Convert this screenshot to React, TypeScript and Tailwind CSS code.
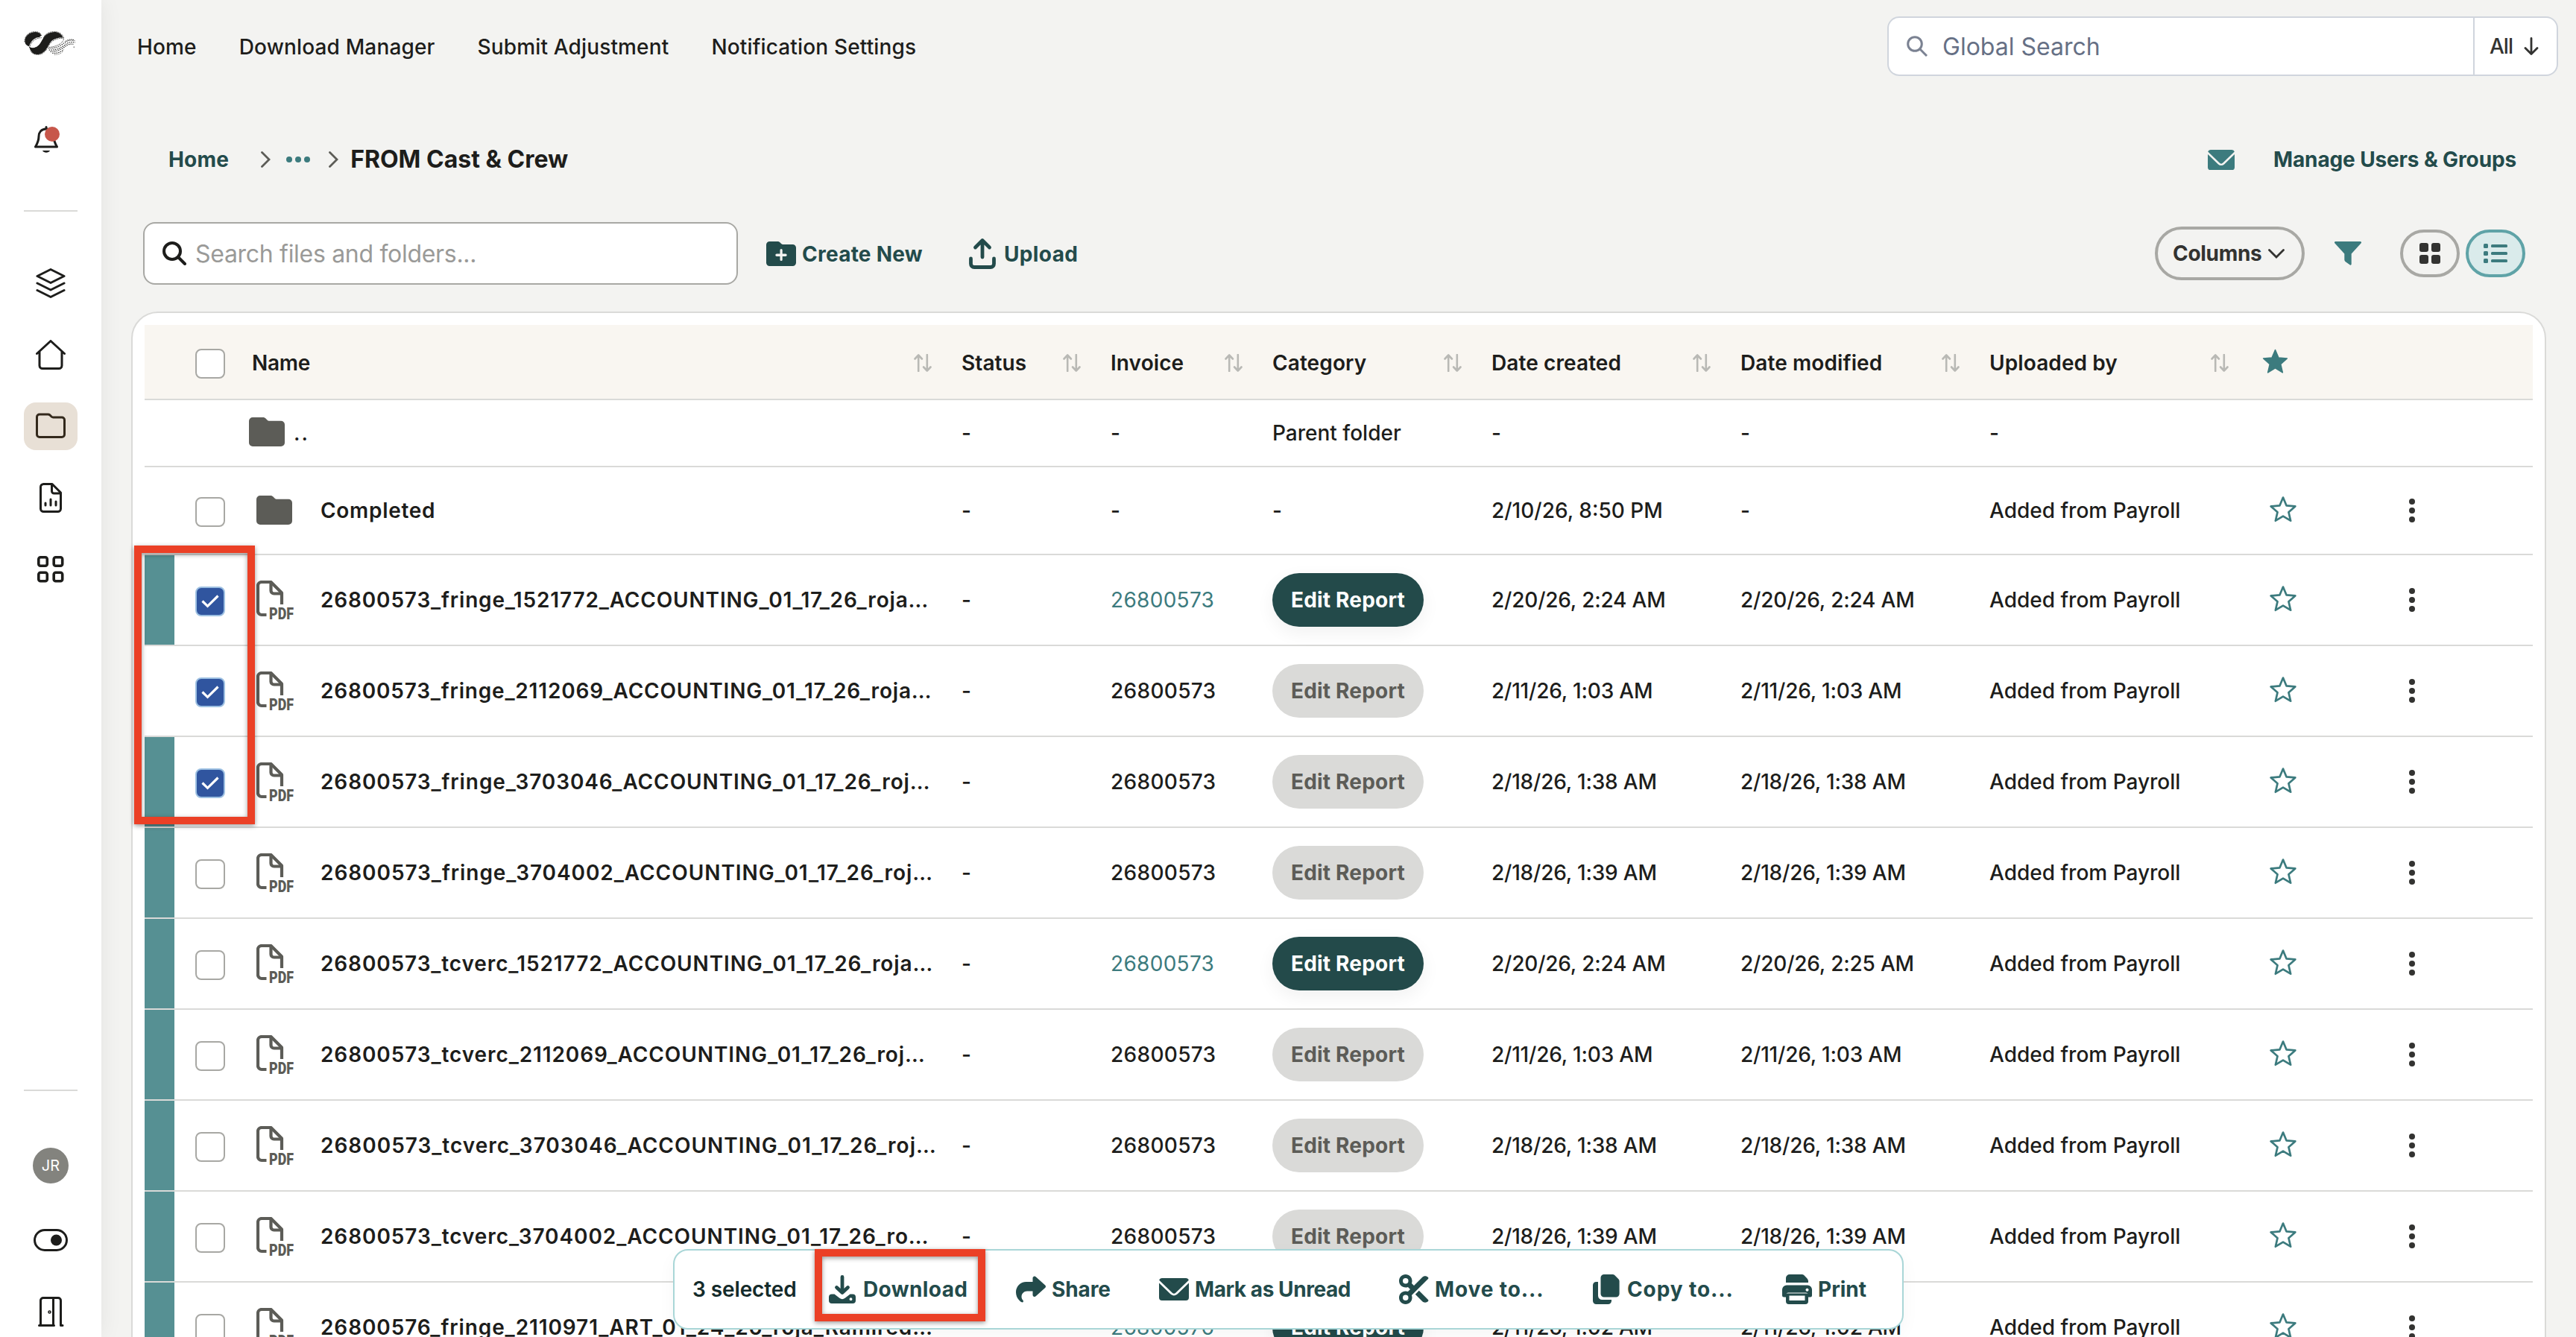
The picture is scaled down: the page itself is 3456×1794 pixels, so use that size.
import type { ReactNode } from "react";
import clsx from "clsx";
import { FaScissors, FaShare } from "react-icons/fa6";

type FileRow = {
  name: string;
  nameClass: string;
  invoice: string;
  active: boolean;
  unread: boolean;
  selected: boolean;
  created: string;
  modified: string;
};

const files: FileRow[] = [
  { name: "26800573_fringe_1521772_ACCOUNTING_01_17_26_roja…", nameClass: "tracking-[0.84px]", invoice: "26800573", active: true, unread: true, selected: true, created: "2/20/26, 2:24 AM", modified: "2/20/26, 2:24 AM" },
  { name: "26800573_fringe_2112069_ACCOUNTING_01_17_26_roja…", nameClass: "tracking-[0.81px]", invoice: "26800573", active: false, unread: false, selected: true, created: "2/11/26, 1:03 AM", modified: "2/11/26, 1:03 AM" },
  { name: "26800573_fringe_3703046_ACCOUNTING_01_17_26_roj…", nameClass: "tracking-[0.9px]", invoice: "26800573", active: false, unread: true, selected: true, created: "2/18/26, 1:38 AM", modified: "2/18/26, 1:38 AM" },
  { name: "26800573_fringe_3704002_ACCOUNTING_01_17_26_roj…", nameClass: "tracking-[0.94px]", invoice: "26800573", active: false, unread: true, selected: false, created: "2/18/26, 1:39 AM", modified: "2/18/26, 1:39 AM" },
  { name: "26800573_tcverc_1521772_ACCOUNTING_01_17_26_roja…", nameClass: "tracking-[0.88px]", invoice: "26800573", active: true, unread: true, selected: false, created: "2/20/26, 2:24 AM", modified: "2/20/26, 2:25 AM" },
  { name: "26800573_tcverc_2112069_ACCOUNTING_01_17_26_roj…", nameClass: "tracking-[0.9px]", invoice: "26800573", active: false, unread: true, selected: false, created: "2/11/26, 1:03 AM", modified: "2/11/26, 1:03 AM" },
  { name: "26800573_tcverc_3703046_ACCOUNTING_01_17_26_roj…", nameClass: "tracking-[0.99px]", invoice: "26800573", active: false, unread: true, selected: false, created: "2/18/26, 1:38 AM", modified: "2/18/26, 1:38 AM" },
  { name: "26800573_tcverc_3704002_ACCOUNTING_01_17_26_ro…", nameClass: "tracking-[0.92px]", invoice: "26800573", active: false, unread: true, selected: false, created: "2/18/26, 1:39 AM", modified: "2/18/26, 1:39 AM" },
  { name: "26800576_fringe_2110971_ART_01_24_26_roja_Ramired…", nameClass: "tracking-[0.9px]", invoice: "26800576", active: true, unread: true, selected: false, created: "2/11/26, 1:02 AM", modified: "2/11/26, 1:02 AM" },
];

const columns = ["Status", "Invoice", "Category", "Date created", "Date modified", "Uploaded by"];

const rowGrid =
  "grid grid-cols-[40px_95px_961px_200px_217px_294px_334px_334px_361px_172px_1fr] border-b-2 border-[#dadad8]";

const STAR = "M12 1.6l2.9 6.9 7.4.6-5.6 4.9 1.7 7.3L12 17.4l-6.4 3.9 1.7-7.3L1.700 9.100l7.400-.6z";

/* ---------- icons ---------- */

function Line({ className, children, width = 2.4 }: { className?: string; children: ReactNode; width?: number }) {
  return (
    <svg viewBox="0 0 40 40" fill="none" stroke="currentColor" strokeWidth={width} strokeLinecap="round" strokeLinejoin="round" className={clsx("size-10 shrink-0", className)}>
      {children}
    </svg>
  );
}

function Logo() {
  return (
    <svg viewBox="0 0 214 96" className="h-8 w-[72px]" fill="#1d1d1b">
      <path d="M3 40C3 18 22 3 45 3c13 0 21 5 24 14l-8 7c-17 0-34 14-41 37C8 57 3 49 3 40z" />
      <path d="M20 60c5 7 14 8 24 5 18-5 22-20 32-35C84 14 100 3 122 3c17 0 29 8 35 23-18-3-40 4-51 18-12 16-20 49-54 49-17 0-28-14-32-33z" />
      <g fill="none" stroke="#1d1d1b" strokeDasharray="2.500 2.500">
        <path d="M2 42C2 16 22 1.500 45 1.500c14 0 24 8 25 16" strokeWidth="3" />
        <path d="M22 66c4-22 22-40 50-40M24 68c14 2 34-2 48-28" strokeWidth="3" />
        <path d="M78 26C86 8 104 1.500 122 1.500c18 0 32 8 38 26" strokeWidth="3" />
        <path d="M26 80c10 14 28 16 42 12 14-6 22-16 28-30" strokeWidth="3" />
        <path d="M98 62c6-22 34-36 60-34 6 12-20 34-56 36" strokeWidth="3" />
      </g>
      <g fill="none" stroke="#1d1d1b" strokeDasharray="4 4" strokeWidth="3.500">
        <path d="M98 68c24 2 44-6 62-20 12-10 26-16 44-10" />
        <path d="M100 75c24 2 48-6 64-20 12-10 24-14 42-10" />
        <path d="M106 82c22 0 44-8 58-20 12-10 22-12 34-10" />
        <path d="M114 88c16 2 34-4 46-14" />
        <path d="M122 94c12 0 22-2 32-10" strokeWidth="2" />
        <path d="M166 40c10-7 24-10 38-4" strokeWidth="2.500" />
      </g>
      <circle cx="201" cy="64" r="3" fill="#999" />
    </svg>
  );
}

function Envelope({ className }: { className?: string }) {
  return (
    <svg viewBox="0 0 40 30" fill="currentColor" className={className}>
      <path d="M4 0h32a4 4 0 0 1 3.800 2.800L22.500 19.500a3.600 3.600 0 0 1-5 0L.2 2.800A4 4 0 0 1 4 0z" />
      <path d="M0 6.600l15.500 15a6.500 6.500 0 0 0 9 0L40 6.600V26a4 4 0 0 1-4 4H4a4 4 0 0 1-4-4z" />
    </svg>
  );
}

function SortIcon() {
  return (
    <svg viewBox="0 0 24 24" className="mt-0.5 size-6" fill="none" stroke="#b9b9b5" strokeWidth="2.600" strokeLinecap="round" strokeLinejoin="round">
      <path d="M6.200 23V1.500M1.500 6.500l4.700-5 4.700 5M17.800 1v21.500M13.100 17.500l4.700 5 4.700-5" />
    </svg>
  );
}

function FolderIcon({ className }: { className?: string }) {
  return (
    <svg viewBox="0 0 48 39" className={clsx("h-[39px] w-12 shrink-0", className)} fill="#5c5c57">
      <path d="M5 0h14c1.500 0 2.600.6 3.500 1.600l2.200 2.200c.8.700 1.600 1 2.800 1H43a5 5 0 0 1 5 5V34a5 5 0 0 1-5 5H5a5 5 0 0 1-5-5V5a5 5 0 0 1 5-5z" />
    </svg>
  );
}

function PdfIcon() {
  return (
    <svg viewBox="0 0 50 52" className="h-[52px] w-[50px] shrink-0" fill="none" stroke="#5c5c57" strokeWidth="4.200" strokeLinejoin="round">
      <path d="M13.500 46H7a5 5 0 0 1-5-5V7a5 5 0 0 1 5-5h12.500L34 16.500V32" />
      <path d="M19.500 2v11.500a4 4 0 0 0 4 4H34" />
      <text x="17" y="51.500" textLength="33" lengthAdjust="spacingAndGlyphs" fill="#5c5c57" stroke="none" className="font-['Roboto',sans-serif] text-[22px] font-black">
        PDF
      </text>
    </svg>
  );
}

function StarOutline() {
  return (
    <svg viewBox="0 0 24 24" className="-mt-0.5 ml-[14px] size-[38px]" fill="none" stroke="#3c7b7e" strokeWidth="1.700" strokeLinejoin="round">
      <path d={STAR} />
    </svg>
  );
}

function Kebab() {
  return (
    <div className="ml-[30px] flex flex-col gap-1">
      <span className="size-2 rounded-full bg-[#333331]" />
      <span className="size-2 rounded-full bg-[#333331]" />
      <span className="size-2 rounded-full bg-[#333331]" />
    </div>
  );
}

function Checkbox({ checked = false }: { checked?: boolean }) {
  return (
    <span
      className={clsx(
        "mt-1 ml-7 flex size-10 items-center justify-center rounded-lg border-2",
        checked ? "border-[#9dc0e2] bg-[#30559f]" : "border-[#a8a8a4] bg-white"
      )}
    >
      {checked && (
        <svg viewBox="0 0 24 18" className="h-[18px] w-6" fill="none" stroke="#fff" strokeWidth="3.200">
          <path d="M1.500 8.500l7 6.800L22.500 1.500" />
        </svg>
      )}
    </span>
  );
}

/* ---------- page parts ---------- */

function Sidebar() {
  return (
    <aside className="z-10 flex w-[136px] shrink-0 flex-col items-center bg-white shadow-[0_0_28px_rgba(0,0,0,0.07)]">
      <div className="mt-[42px] h-8">
        <Logo />
      </div>
      <div className="relative mt-[94px] mr-3 h-10 w-8 text-[#1d1d1b]">
        <svg viewBox="0 0 32 38" className="mt-[1px] h-[38px] w-8" fill="none" stroke="currentColor" strokeWidth="3" strokeLinecap="round" strokeLinejoin="round">
          <path d="M16 1.500v2M16 4C9 4 6 9 6 14c0 6-1.500 9-4.500 14h29C27.500 23 26 20 26 14c0-5-3-10-10-10z" />
          <path d="M11 33h10c-1.500 3.500-8.500 3.500-10 0z" fill="currentColor" stroke="none" />
        </svg>
        <span className="absolute top-0.5 left-3.5 size-5 rounded-full bg-[#c7574b]" />
      </div>
      <div className="mt-[74px] h-0.5 w-[72px] bg-[#dadad8]" />
      <nav className="mt-16 flex flex-col gap-8 text-[#1d1d1b]">
        <div className="flex h-16 w-[72px] items-center justify-center">
          <Line width={3}>
            <path d="M20 1.500l18 9-18 9-18-9zM2 20l18 9 18-9M2 29.500l18 9 18-9" />
          </Line>
        </div>
        <div className="flex h-16 w-[72px] items-center justify-center">
          <Line width={3}>
            <path d="M1.500 18.500L20 1.500l18.500 17M5 16v18.500a4 4 0 0 0 4 4h22a4 4 0 0 0 4-4V16" />
          </Line>
        </div>
        <div className="flex h-16 w-[72px] items-center justify-center rounded-2xl bg-[#e8e0d6] text-[#33291c]">
          <Line width={3}>
            <path d="M5 4h11.500c1 0 1.800.4 2.500 1l2 2c.6.600 1.500 1 2.500 1H35a3.500 3.500 0 0 1 3.500 3.500V31a3.500 3.500 0 0 1-3.500 3.500H5A3.500 3.500 0 0 1 1.500 31V7.500A3.500 3.500 0 0 1 5 4z" />
          </Line>
        </div>
        <div className="flex h-16 w-[72px] items-center justify-center">
          <Line width={3}>
            <path d="M10 1.500h12L33.500 13v21.500a4 4 0 0 1-4 4H10.500a4 4 0 0 1-4-4V5.500a4 4 0 0 1 4-4zM21.500 2v9a3 3 0 0 0 3 3h9M13 27v3M20 22v8M27 25v5" />
          </Line>
        </div>
        <div className="flex h-16 w-[72px] items-center justify-center">
          <Line width={3.6}>
            <rect x="3.800" y="3.800" width="11.500" height="11.500" rx="2.500" />
            <rect x="24.200" y="3.800" width="11.500" height="11.500" rx="2.500" />
            <rect x="3.800" y="24.200" width="11.500" height="11.500" rx="2.500" />
            <rect x="24.200" y="24.200" width="11.500" height="11.500" rx="2.500" />
          </Line>
        </div>
      </nav>
      <div className="mt-auto h-0.5 w-[72px] bg-[#dadad8]" />
      <div className="mt-[76px] flex size-12 items-center justify-center rounded-full bg-[#83837e] text-[20px] text-white">JR</div>
      <svg viewBox="0 0 46 30" className="mt-[61px] h-[30px] w-[46px]" fill="none" stroke="#1d1d1b" strokeWidth="3">
        <rect x="1.500" y="1.500" width="43" height="27" rx="13.500" />
        <circle cx="30.500" cy="15" r="7.500" fill="#1d1d1b" stroke="none" />
      </svg>
      <Line width={3} className="mt-[61px] mb-[14px] text-[#1d1d1b]">
        <path d="M4.500 38.500h20M6.500 38V5a3.500 3.500 0 0 1 3.500-3.500h13.500V38.500M24 1.500h6A3.500 3.500 0 0 1 33.500 5v33.500H36" />
        <circle cx="18.500" cy="20.500" r="0.800" />
      </Line>
    </aside>
  );
}

function TopBar() {
  return (
    <header className="flex h-[124px] shrink-0 items-center justify-between pr-6 pl-12">
      <nav className="flex gap-[57px] pt-0.5 text-[28px] font-medium tracking-[0.15px]">
        <a>Home</a>
        <a>Download Manager</a>
        <a>Submit Adjustment</a>
        <a>Notification Settings</a>
      </nav>
      <div className="flex h-20 w-[900px] items-center rounded-2xl border-2 border-[#d0d5dd] bg-white">
        <svg viewBox="0 0 28 28" className="ml-6 size-7" fill="none" stroke="#7b8292" strokeWidth="3">
          <circle cx="11" cy="11" r="9.300" />
          <path d="M17.500 17.500l9.500 9.500" />
        </svg>
        <span className="ml-5 flex-1 pt-0.5 text-[32px] text-[#667085]">Global Search</span>
        <div className="flex h-full w-[112px] items-center border-l-2 border-[#d0d5dd] pl-5 text-[28px] font-medium text-[#333331]">
          <span className="tracking-[-1px]">All</span>
          <svg viewBox="0 0 20 24" className="ml-[15px] h-6 w-5" fill="none" stroke="currentColor" strokeWidth="2.800" strokeLinecap="round" strokeLinejoin="round">
            <path d="M10 1.500v21M2 14.500l8 8 8-8" />
          </svg>
        </div>
      </div>
    </header>
  );
}

function Chevron({ className }: { className?: string }) {
  return (
    <svg viewBox="0 0 13 22" className={clsx("h-[22px] w-[13px]", className)} fill="none" stroke="#5c5c57" strokeWidth="2.800" strokeLinecap="round">
      <path d="M1.500 1.500l9.500 9.500-9.500 9.500" />
    </svg>
  );
}

function Breadcrumbs() {
  return (
    <div className="flex h-[174px] shrink-0 items-center pt-1.5 pr-[80px] pl-[90px] text-[#234b4b]">
      <a className="text-[28px] font-bold tracking-[0.2px]">Home</a>
      <Chevron className="ml-[43px]" />
      <div className="ml-[21px] flex gap-1">
        <span className="size-2 rounded-full bg-[#3c7b7e]" />
        <span className="size-2 rounded-full bg-[#3c7b7e]" />
        <span className="size-2 rounded-full bg-[#3c7b7e]" />
      </div>
      <Chevron className="ml-[25px]" />
      <span className="ml-4 text-[32px] font-bold text-[#1d1d1b]">FROM Cast &amp; Crew</span>
      <Envelope className="ml-auto h-[27px] w-9 text-[#3c7b7e]" />
      <a className="ml-[52px] text-[28px] font-bold tracking-[-0.13px]">Manage Users &amp; Groups</a>
    </div>
  );
}

function Toolbar() {
  return (
    <div className="flex h-[84px] shrink-0 items-center pr-[68px] pl-14 text-[28px] font-bold text-[#234b4b]">
      <div className="flex h-full w-[798px] items-center rounded-2xl border-2 border-[#a8a8a4] bg-white">
        <svg viewBox="0 0 32 32" className="ml-6 size-8" fill="none" stroke="#1d1d1b" strokeWidth="4" strokeLinecap="round">
          <circle cx="13" cy="13" r="11" />
          <path d="M21 21l9 9" />
        </svg>
        <span className="ml-3 pt-0.5 text-[32px] font-normal tracking-[-0.3px] text-[#9a9a98]">Search files and folders...</span>
      </div>
      <svg viewBox="0 0 40 33" className="ml-[38px] h-[33px] w-10" fill="currentColor">
        <path fillRule="evenodd" d="M4.500 0h10.500c1.400 0 2.500.4 3.400 1.300l1.700 1.700c.7.700 1.500 1 2.400 1h13A4.500 4.500 0 0 1 40 8.500v20a4.500 4.500 0 0 1-4.500 4.500h-31A4.500 4.500 0 0 1 0 28.500v-24A4.500 4.500 0 0 1 4.500 0zM18.500 11.500V16.500h-4.500a1.700 1.700 0 0 0 0 3.400h4.500v4.600a1.600 1.600 0 0 0 3.200 0v-4.600H26a1.700 1.700 0 0 0 0-3.400h-4.300v-5a1.600 1.600 0 0 0-3.200 0z" />
      </svg>
      <span className="ml-2 pt-0.5 tracking-[0.25px]">Create New</span>
      <svg viewBox="0 0 36 42" className="ml-[62px] h-[42px] w-9" fill="none" stroke="currentColor" strokeWidth="4.800" strokeLinecap="round" strokeLinejoin="round">
        <path d="M18 26V4M8.500 13L18 3.500l9.500 9.500M2.500 28v7a4.500 4.500 0 0 0 4.500 4.500h22a4.500 4.500 0 0 0 4.500-4.500v-7" />
      </svg>
      <span className="ml-[11px] pt-0.5 tracking-[0.4px]">Upload</span>

      <button className="ml-auto flex h-[72px] w-[201px] items-center rounded-full border-4 border-[#a8a8a4] pl-5 text-[#333331]">
        <span className="tracking-[-0.3px]">Columns</span>
        <svg viewBox="0 0 22 13" className="ml-[9px] h-[13px] w-[22px]" fill="none" stroke="currentColor" strokeWidth="2.800" strokeLinecap="round">
          <path d="M1.500 1.500L11 11l9.500-9.500" />
        </svg>
      </button>
      <svg viewBox="0 0 36 32" className="ml-10 h-8 w-9" fill="#3c7b7e">
        <path d="M1.500 0h33a1.400 1.400 0 0 1 1.200 2.300L22.700 16.500V30.500a1.200 1.200 0 0 1-1.900 1l-6.300-4.600a3 3 0 0 1-1.200-2.400v-8L.3 2.300A1.400 1.400 0 0 1 1.500 0z" />
      </svg>
      <button className="ml-[52px] flex h-16 w-20 items-center justify-center rounded-full border-4 border-[#a8a8a4]">
        <span className="grid grid-cols-2 gap-1">
          <span className="size-3 rounded-[3px] bg-[#333331]" />
          <span className="size-3 rounded-[3px] bg-[#333331]" />
          <span className="size-3 rounded-[3px] bg-[#333331]" />
          <span className="size-3 rounded-[3px] bg-[#333331]" />
        </span>
      </button>
      <button className="ml-2 flex h-16 w-20 items-center justify-center rounded-full border-4 border-[#5fa3a7] bg-[#daebeb]">
        <svg viewBox="0 0 32 26" className="h-[26px] w-8" fill="#3c7b7e">
          <rect width="6" height="6" rx="1.500" />
          <rect y="10" width="6" height="6" rx="1.500" />
          <rect y="20" width="6" height="6" rx="1.500" />
          <rect x="10" y="1" width="22" height="4" rx="1.500" />
          <rect x="10" y="11" width="22" height="4" rx="1.500" />
          <rect x="10" y="21" width="22" height="4" rx="1.500" />
        </svg>
      </button>
    </div>
  );
}

function TableHeader() {
  return (
    <div className={clsx(rowGrid, "h-[101px] items-center bg-[#f9f6f1] text-[28px] font-semibold")}>
      <span />
      <Checkbox />
      <div className="flex items-center justify-between pr-10 pl-[9px]">
        <span className="pt-0.5 tracking-[-0.3px]">Name</span>
        <SortIcon />
      </div>
      {columns.map((col) => (
        <div key={col} className="flex items-center justify-between pr-10">
          <span className="pt-0.5 tracking-[0.1px]">{col}</span>
          <SortIcon />
        </div>
      ))}
      <svg viewBox="0 0 24 24" className="ml-1 size-[37px]" fill="#3c7b7e" stroke="#3c7b7e" strokeLinejoin="round">
        <path d={STAR} />
      </svg>
    </div>
  );
}

function FileRowView({ file }: { file: FileRow }) {
  return (
    <div className={clsx(rowGrid, "h-[122px] items-center")}>
      <span className={clsx("h-full", file.unread && "bg-[#569093]")} />
      <Checkbox checked={file.selected} />
      <div className="flex items-center pl-[15px]">
        <PdfIcon />
        <span className={clsx("ml-9 font-semibold whitespace-nowrap", file.nameClass)}>{file.name}</span>
      </div>
      <span>-</span>
      <span className={clsx("tracking-[0.3px]", file.active && "font-normal text-[#3c7b7e]")}>{file.invoice}</span>
      <button
        className={clsx(
          "h-[72px] w-[203px] rounded-full font-bold tracking-[0.2px]",
          file.active ? "bg-[#234a4a] text-white shadow-[0_8px_24px_rgba(0,0,0,0.06)]" : "bg-[#dadad8] text-[#5c5c57]"
        )}
      >
        Edit Report
      </button>
      <span className="tracking-[-0.2px]">{file.created}</span>
      <span className="tracking-[-0.2px]">{file.modified}</span>
      <span>Added from Payroll</span>
      <StarOutline />
      <Kebab />
    </div>
  );
}

function BulkBar() {
  return (
    <div className="absolute top-[1676px] left-[903px] z-20 flex h-[108px] w-[1651px] items-center rounded-[20px] border-2 border-[#a9d6d7] bg-white text-[28px] font-bold text-[#234b4b] shadow-[0_8px_24px_rgba(0,0,0,0.04)]">
      <span className="ml-6 w-[183px] font-semibold tracking-[-0.1px] text-[#142b2b]">3 selected</span>
      <div className="flex w-[251px] items-center">
        <svg viewBox="0 0 36 38" className="h-[38px] w-9" fill="none" stroke="currentColor" strokeWidth="4.800" strokeLinecap="round" strokeLinejoin="round">
          <path d="M18 2.500v20M10.500 16.500l7.500 7 7.500-7" />
          <path fill="currentColor" stroke="none" fillRule="evenodd" d="M4 25.500h3.500l6.800 5.200a6 6 0 0 0 7.400 0l6.800-5.200H32a4 4 0 0 1 4 4V34a4 4 0 0 1-4 4H4a4 4 0 0 1-4-4v-4.500a4 4 0 0 1 4-4zM29.500 30.300a1.900 1.900 0 1 0 .01 0z" />
        </svg>
        <span className="ml-2.5 tracking-[0.4px]">Download</span>
      </div>
      <div className="flex w-[192px] items-center">
        <FaShare className="size-10" />
        <span className="ml-2 tracking-[-0.1px]">Share</span>
      </div>
      <div className="flex w-[322px] items-center">
        <Envelope className="h-[30px] w-10" />
        <span className="ml-2 tracking-[-0.44px]">Mark as Unread</span>
      </div>
      <div className="flex w-[260px] items-center">
        <FaScissors className="size-10" />
        <span className="ml-2 tracking-[0.9px]">Move to...</span>
      </div>
      <div className="flex w-[254px] items-center">
        <svg viewBox="0 0 36 40" className="h-10 w-9" fill="currentColor">
          <path d="M15 0h11.500c1 0 2 .4 2.700 1.100l5.200 5.200A4 4 0 0 1 35.600 9v17a4.500 4.500 0 0 1-4.500 4.500H15a4.500 4.500 0 0 1-4.500-4.500V4.500A4.500 4.500 0 0 1 15 0z" />
          <path d="M4.500 10H7v18.500a5.500 5.500 0 0 0 5.500 5.500H25v1.500a4.500 4.500 0 0 1-4.500 4.500h-16A4.500 4.500 0 0 1 0 35.500v-21A4.500 4.500 0 0 1 4.500 10z" />
        </svg>
        <span className="ml-2.5 tracking-[0.9px]">Copy to...</span>
      </div>
      <div className="flex items-center">
        <svg viewBox="0 0 40 40" className="size-10" fill="currentColor">
          <path d="M10 0h16.500c1 0 2 .4 2.700 1.100l4.300 4.300A5 5 0 0 1 35 9v2H5V5a5 5 0 0 1 5-5z" />
          <path fillRule="evenodd" d="M6 14.500h28a6 6 0 0 1 6 6v7.500a2.500 2.500 0 0 1-2.500 2.500H35v-2.500a3.500 3.500 0 0 0-3.500-3.500h-23A3.500 3.500 0 0 0 5 28v2.500H2.500A2.500 2.500 0 0 1 0 28v-7.500a6 6 0 0 1 6-6zM33.500 18.800a2 2 0 1 0 .01 0z" />
          <path fillRule="evenodd" d="M5 25.500h30V36a4 4 0 0 1-4 4H9a4 4 0 0 1-4-4zM9.500 28.500V35h21v-6.500z" />
        </svg>
        <span className="ml-2">Print</span>
      </div>
    </div>
  );
}

export default function App() {
  return (
    <div className="relative flex h-[1794px] w-[3456px] overflow-hidden bg-[#f3f3f1] font-['Inter',sans-serif] text-[#1d1d1b]">
      <Sidebar />
      <main className="flex flex-1 flex-col overflow-hidden">
        <TopBar />
        <Breadcrumbs />
        <Toolbar />
        <section className="mt-9 mr-10 ml-10 h-[1400px] shrink-0 rounded-t-[36px] border-2 border-[#dadad8] bg-white px-4 pt-4 text-[28px] font-medium">
          <TableHeader />
          <div className={clsx(rowGrid, "h-[90px] items-center")}>
            <span />
            <span />
            <div className="flex items-center pl-[5px]">
              <FolderIcon className="-mt-1" />
              <span className="ml-3 tracking-[2px]">..</span>
            </div>
            <span>-</span>
            <span>-</span>
            <span>Parent folder</span>
            <span>-</span>
            <span>-</span>
            <span>-</span>
          </div>
          <div className={clsx(rowGrid, "h-[118px] items-center")}>
            <span />
            <Checkbox />
            <div className="flex items-center pl-[15px]">
              <FolderIcon className="-mt-0.5" />
              <span className="ml-[38px] font-semibold tracking-[0.7px]">Completed</span>
            </div>
            <span>-</span>
            <span>-</span>
            <span>-</span>
            <span>2/10/26, 8:50 PM</span>
            <span>-</span>
            <span>Added from Payroll</span>
            <StarOutline />
            <Kebab />
          </div>
          {files.map((file) => (
            <FileRowView key={file.name} file={file} />
          ))}
        </section>
      </main>
      <BulkBar />
      {/* callout frames */}
      <div className="absolute top-[732px] left-[180px] z-30 h-[374px] w-[162px] border-10 border-[#eb4026] drop-shadow-[0_2px_3px_rgba(0,0,0,0.4)]" />
      <div className="absolute top-[1676px] left-[1093px] z-30 h-[97px] w-[229px] border-10 border-[#eb4026] drop-shadow-[0_2px_3px_rgba(0,0,0,0.4)]" />
    </div>
  );
}
